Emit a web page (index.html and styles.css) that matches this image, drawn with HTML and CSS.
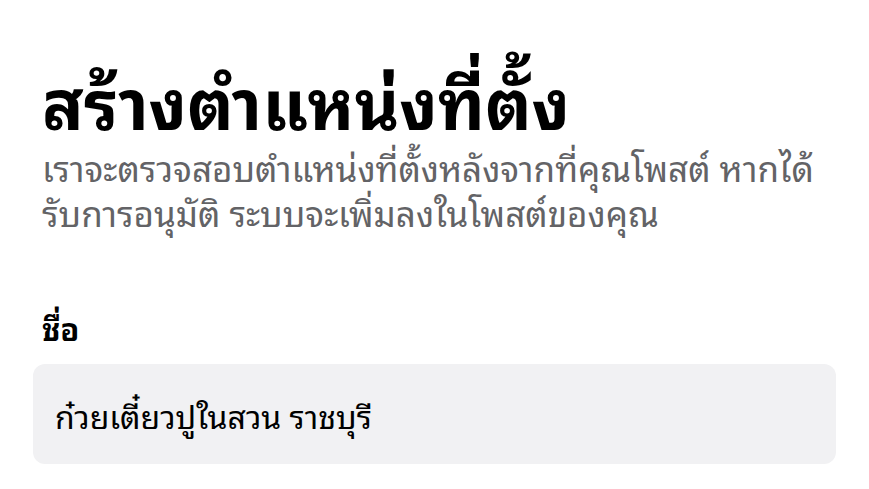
FILE: index.html
```html
<!DOCTYPE html>
<html lang="th">
<head>
<meta charset="utf-8">
<link rel="stylesheet" href="styles.css">
</head>
<body>
<main class="page">
  <h1 class="title">สร้างตำแหน่งที่ตั้ง</h1>
  <p class="subtitle">เราจะตรวจสอบตำแหน่งที่ตั้งหลังจากที่คุณโพสต์ หากได้&#8203;รับการอนุมัติ ระบบจะเพิ่มลงในโพสต์ของคุณ</p>
  <label class="label">ชื่อ</label>
  <div class="field">ก๋วยเตี๋ยวปูในสวน ราชบุรี</div>
</main>
</body>
</html>
```
FILE: styles.css
```css
html, body {
  margin: 0;
  padding: 0;
  background: #ffffff;
}
.page {
  font-family: "Noto Sans Thai Looped", "Noto Sans Thai", "Noto Sans", sans-serif;
  padding: 54px 33px 0 33px;
  width: 803px;
}
.title {
  margin: 0 0 0 9px;
  font-size: 69px;
  font-weight: 700;
  line-height: 90px;
  color: #000;
}
.subtitle {
  margin: 0 0 0 9px;
  font-size: 35px;
  line-height: 45px;
  color: #636366;
  width: 790px;
}
.label {
  display: block;
  margin: 73px 0 0 9px;
  font-size: 31px;
  font-weight: 700;
  line-height: 40px;
  color: #000;
}
.field {
  margin-top: 17px;
  height: 100px;
  box-sizing: border-box;
  padding: 0 22px;
  display: flex;
  align-items: center;
  background: #f1f1f3;
  border-radius: 12px;
  font-size: 32px;
  color: #000;
}
```
